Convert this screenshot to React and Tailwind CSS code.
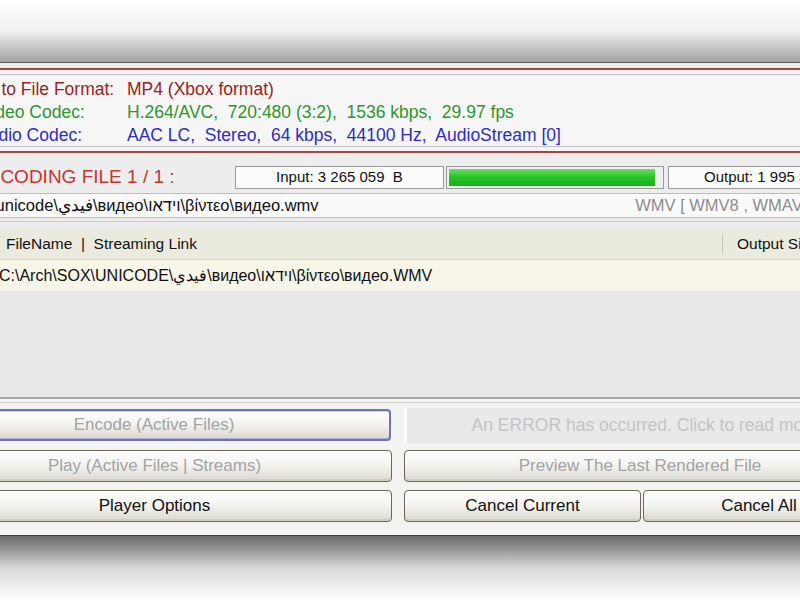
import React from "react";

const font = { fontFamily: '"Liberation Sans", Arial, sans-serif' };

function XpButton({ children, disabled, focused, className = "" }) {
  return (
    <div
      className={
        "shrink-0 flex items-center justify-center rounded-[4px] bg-linear-to-b from-white via-[#f3f2ee] to-[#d9d7cf] text-[17px] whitespace-nowrap " +
        (focused
          ? "border-2 border-[#6f74b0] shadow-[inset_0_1px_0_#c4c9ee,inset_0_-1px_0_#aab0e0] "
          : "border border-[#6e6656] shadow-[inset_0_-2px_0_#cfccc2] ") +
        (disabled ? "text-[#a3a3a3] " : "text-[#111] ") +
        className
      }
    >
      {children}
    </div>
  );
}

export default function App() {
  return (
    <div className="w-[800px] h-[600px] overflow-hidden bg-white flex flex-col" style={font}>
      {/* shadow above the window */}
      <div className="h-[62px] shrink-0 bg-linear-to-b from-white via-[#f0f0f0] to-[#a2a2a2]" />
      <div className="h-px shrink-0 bg-[#5c5c5c]" />

      {/* window body */}
      <div className="flex flex-col shrink-0 bg-[#ededed] h-[472px]">
        <div className="h-[5px]" />
        <div className="h-[2px] bg-[#a84444]" />
        <div className="h-[4px] bg-[#f4f4f4]" />
        <div className="h-px bg-[#c4c4c4]" />

        {/* format info */}
        <div className="h-[71px] bg-[#f6f6f6] flex flex-col justify-center pt-[3px] text-[17.5px] leading-[23px] whitespace-pre">
          <div className="flex">
            <span className="ml-[-56px] w-[183px] shrink-0 text-[#a01c1c]">Output to File Format:</span>
            <span className="text-[#a01c1c]">MP4 (Xbox format)</span>
          </div>
          <div className="flex">
            <span className="ml-[-20px] w-[147px] shrink-0 text-[#2e962e]">Video Codec:</span>
            <span className="text-[#2e962e]">H.264/AVC,  720:480 (3:2),  1536 kbps,  29.97 fps</span>
          </div>
          <div className="flex">
            <span className="ml-[-23px] w-[150px] shrink-0 text-[#2c2cc8]">Audio Codec:</span>
            <span className="text-[#2c2cc8]">AAC LC,  Stereo,  64 kbps,  44100 Hz,  AudioStream [0]</span>
          </div>
        </div>

        <div className="h-px bg-[#c4c4c4]" />
        <div className="h-[4px] bg-[#f4f4f4]" />
        <div className="h-[2px] bg-[#a84444]" />
        <div className="h-[11px]" />

        {/* encoding status */}
        <div className="h-[27px] flex items-center">
          <span className="ml-[-26px] w-[261px] shrink-0 text-[19px] text-[#c8342f] whitespace-pre">ENCODING FILE 1 / 1 :</span>
          <div className="w-[209px] h-[23px] shrink-0 border border-[#9a9a9a] bg-[#fbfbfb] flex items-center justify-center text-[15px] text-[#111] whitespace-pre">
            Input: 3 265 059  B
          </div>
          <div className="ml-[2px] w-[218px] h-[23px] shrink-0 border border-[#9a9a9a] bg-[#f0f0f0] p-[2px] pr-[8px]">
            <div className="h-full bg-linear-to-b from-[#5fe05f] via-[#22c322] to-[#1fae1f]" />
          </div>
          <div className="ml-[4px] w-[160px] h-[23px] shrink-0 border border-[#9a9a9a] bg-[#fbfbfb] flex items-center pl-[35px] text-[15px] text-[#111] whitespace-pre">
            Output: 1 995 371  B
          </div>
        </div>

        <div className="h-[2px]" />
        <div className="h-px bg-[#bdbdbd]" />
        {/* source path */}
        <div className="h-[23px] bg-[#fafafa] flex items-center text-[16.5px] whitespace-pre">
          <span className="ml-[-64px] shrink-0 text-[#111]">C:\Arch\unicode\فيدي\видео\וידאו\βίντεο\видео.wmv</span>
          <span className="ml-auto mr-[-21px] shrink-0 text-[#8c8c8c]">WMV [ WMV8 , WMAV2 ]</span>
        </div>
        <div className="h-px bg-[#bdbdbd]" />
        <div className="h-[3px]" />
        <div className="h-px bg-[#c8c8c8]" />
        <div className="h-[6px]" />

        {/* file list */}
        <div className="h-[32px] bg-[#ebeadf] border-b border-[#dcdbd0] flex items-center text-[15.5px] text-[#111] whitespace-pre">
          <span className="w-[722px] shrink-0 pl-[6px]">FileName  |  Streaming Link</span>
          <span className="w-px h-[20px] shrink-0 bg-[#c8c7bd]" />
          <span className="pl-[14px] shrink-0">Output Size</span>
        </div>
        <div className="h-[31px] bg-[#f7f6e8] flex items-center text-[16px] text-[#111] whitespace-pre">
          <span className="ml-[-1px] shrink-0">C:\Arch\SOX\UNICODE\فيدي\видео\וידאו\βίντεο\видео.WMV</span>
        </div>
        <div className="h-[106px] bg-[#e9e9e9]" />
        <div className="h-[2px] bg-[#a8a8a8]" />
        <div className="h-[3px] bg-[#f4f4f4]" />
        <div className="h-px bg-[#cfcfcf]" />

        {/* buttons */}
        <div className="flex-1 bg-[#f3f3f2] pt-[5px] flex flex-col gap-[8px]">
          <div className="flex h-[34px] items-center">
            <XpButton disabled focused className="ml-[-83px] w-[474px] h-[32px]">Encode (Active Files)</XpButton>
            <div className="ml-[13px] w-[472px] h-[35px] shrink-0 bg-[#e9e9e9] border-l-[3px] border-white flex items-center justify-center pl-[22px] text-[17.5px] text-[#c4c4c4] whitespace-nowrap">
              An ERROR has occurred. Click to read more...
            </div>
          </div>
          <div className="flex">
            <XpButton disabled className="ml-[-83px] w-[475px] h-[32px]">Play (Active Files | Streams)</XpButton>
            <XpButton disabled className="ml-[12px] w-[472px] h-[32px]">Preview The Last Rendered File</XpButton>
          </div>
          <div className="flex">
            <XpButton className="ml-[-83px] w-[475px] h-[32px]">Player Options</XpButton>
            <XpButton className="ml-[12px] w-[237px] h-[32px]">Cancel Current</XpButton>
            <XpButton className="ml-[2px] w-[232px] h-[32px]">Cancel All</XpButton>
          </div>
        </div>
      </div>

      <div className="h-px shrink-0 bg-[#3a3a3a]" />
      {/* shadow below the window */}
      <div className="flex-1 bg-linear-to-b from-[#6a6a6a] via-[#d8d8d8] to-white" />
    </div>
  );
}
